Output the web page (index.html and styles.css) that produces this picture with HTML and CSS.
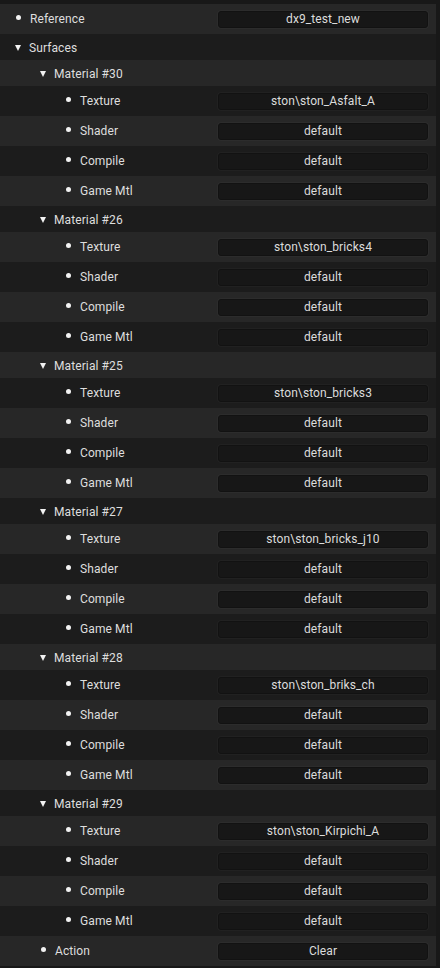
FILE: index.html
```html
<!DOCTYPE html>
<html>
<head>
<meta charset="utf-8">
<link rel="stylesheet" href="styles.css">
</head>
<body>
<div class="panel">
  <div class="tree">
    <div class="row field-row l0"><span class="dot"></span><span class="label">Reference</span><span class="field">dx9_test_new</span></div>
    <div class="row head l0"><span class="tri"></span><span class="label">Surfaces</span></div>

    <div class="row head l1"><span class="tri"></span><span class="label">Material #30</span></div>
    <div class="row field-row l2"><span class="dot"></span><span class="label">Texture</span><span class="field">ston\ston_Asfalt_A</span></div>
    <div class="row field-row l2"><span class="dot"></span><span class="label">Shader</span><span class="field">default</span></div>
    <div class="row field-row l2"><span class="dot"></span><span class="label">Compile</span><span class="field">default</span></div>
    <div class="row field-row l2"><span class="dot"></span><span class="label">Game Mtl</span><span class="field">default</span></div>

    <div class="row head l1"><span class="tri"></span><span class="label">Material #26</span></div>
    <div class="row field-row l2"><span class="dot"></span><span class="label">Texture</span><span class="field">ston\ston_bricks4</span></div>
    <div class="row field-row l2"><span class="dot"></span><span class="label">Shader</span><span class="field">default</span></div>
    <div class="row field-row l2"><span class="dot"></span><span class="label">Compile</span><span class="field">default</span></div>
    <div class="row field-row l2"><span class="dot"></span><span class="label">Game Mtl</span><span class="field">default</span></div>

    <div class="row head l1"><span class="tri"></span><span class="label">Material #25</span></div>
    <div class="row field-row l2"><span class="dot"></span><span class="label">Texture</span><span class="field">ston\ston_bricks3</span></div>
    <div class="row field-row l2"><span class="dot"></span><span class="label">Shader</span><span class="field">default</span></div>
    <div class="row field-row l2"><span class="dot"></span><span class="label">Compile</span><span class="field">default</span></div>
    <div class="row field-row l2"><span class="dot"></span><span class="label">Game Mtl</span><span class="field">default</span></div>

    <div class="row head l1"><span class="tri"></span><span class="label">Material #27</span></div>
    <div class="row field-row l2"><span class="dot"></span><span class="label">Texture</span><span class="field">ston\ston_bricks_j10</span></div>
    <div class="row field-row l2"><span class="dot"></span><span class="label">Shader</span><span class="field">default</span></div>
    <div class="row field-row l2"><span class="dot"></span><span class="label">Compile</span><span class="field">default</span></div>
    <div class="row field-row l2"><span class="dot"></span><span class="label">Game Mtl</span><span class="field">default</span></div>

    <div class="row head l1"><span class="tri"></span><span class="label">Material #28</span></div>
    <div class="row field-row l2"><span class="dot"></span><span class="label">Texture</span><span class="field">ston\ston_briks_ch</span></div>
    <div class="row field-row l2"><span class="dot"></span><span class="label">Shader</span><span class="field">default</span></div>
    <div class="row field-row l2"><span class="dot"></span><span class="label">Compile</span><span class="field">default</span></div>
    <div class="row field-row l2"><span class="dot"></span><span class="label">Game Mtl</span><span class="field">default</span></div>

    <div class="row head l1"><span class="tri"></span><span class="label">Material #29</span></div>
    <div class="row field-row l2"><span class="dot"></span><span class="label">Texture</span><span class="field">ston\ston_Kirpichi_A</span></div>
    <div class="row field-row l2"><span class="dot"></span><span class="label">Shader</span><span class="field">default</span></div>
    <div class="row field-row l2"><span class="dot"></span><span class="label">Compile</span><span class="field">default</span></div>
    <div class="row field-row l2"><span class="dot"></span><span class="label">Game Mtl</span><span class="field">default</span></div>

    <div class="row field-row l1"><span class="dot"></span><span class="label">Action</span><span class="field">Clear</span></div>
  </div>
</div>
</body>
</html>
```

FILE: styles.css
```css
html, body {
  margin: 0;
  padding: 0;
  background: #181818;
}

body {
  width: 440px;
  height: 968px;
  overflow: hidden;
  font-family: Roboto, "Liberation Sans", sans-serif;
  font-size: 12px;
  color: #dedede;
}

.panel {
  display: flex;
  padding-top: 4px;
}

.tree {
  width: 436px;
  display: flex;
  flex-direction: column;
}

.row {
  display: flex;
  align-items: center;
  box-sizing: border-box;
  background: #1c1c1c;
}

.row:nth-child(odd) {
  background: #272727;
}

.field-row {
  height: 30px;
}

.head {
  height: 26px;
  padding-top: 2px;
}

.l0 { padding-left: 15px; }
.l1 { padding-left: 40px; }
.l2 { padding-left: 65px; }

.dot {
  width: 5px;
  height: 5px;
  border-radius: 50%;
  background: #f2f2f2;
  margin-left: 1px;
  margin-right: 9px;
  margin-top: -3px;
  flex: none;
}

.tri {
  width: 0;
  height: 0;
  border-left: 3.5px solid transparent;
  border-right: 3.5px solid transparent;
  border-top: 6px solid #f2f2f2;
  margin-right: 8px;
  margin-top: -1px;
  flex: none;
}

.label {
  flex: 1;
  white-space: nowrap;
  line-height: 14px;
  letter-spacing: 0.1px;
}

.field {
  width: 210px;
  height: 17px;
  margin-right: 8px;
  box-sizing: border-box;
  background: #171717;
  border: 1px solid #121212;
  border-radius: 3px;
  box-shadow: 0 0 0 1px rgba(255, 255, 255, 0.025);
  display: flex;
  align-items: center;
  justify-content: center;
  color: #dcdcdc;
  line-height: 14px;
  letter-spacing: 0.1px;
  flex: none;
}
```
